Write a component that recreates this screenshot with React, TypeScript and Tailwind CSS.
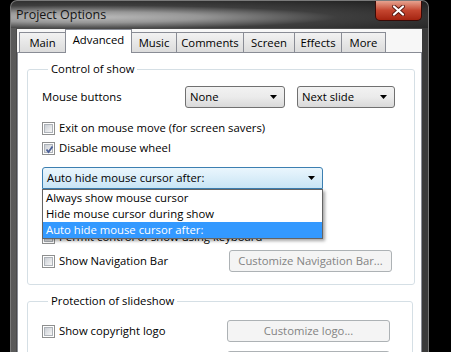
import React from "react";

const TABS = [
  { label: "Main", w: 47 },
  { label: "Advanced", w: 67, active: true },
  { label: "Music", w: 46 },
  { label: "Comments", w: 68 },
  { label: "Screen", w: 52 },
  { label: "Effects", w: 48 },
  { label: "More", w: 45 },
];

function Checkbox({ checked }: { checked?: boolean }) {
  return (
    <span className="relative w-[13px] h-[13px] border border-[#8e8f8f] bg-white p-[1px] flex shrink-0">
      <span className="flex-1 border border-[#aeb3b9] bg-gradient-to-br from-[#cbcfd5] to-[#f6f6f6]" />
      {checked && (
        <svg className="absolute left-[1px] top-[1px]" width="11" height="11" viewBox="0 0 11 11">
          <path d="M2.5 5.5 L4.5 8 L8.5 2.5" fill="none" stroke="#4a5f97" strokeWidth="1.8" />
        </svg>
      )}
    </span>
  );
}

function CheckRow({ label, checked }: { label: string; checked?: boolean }) {
  return (
    <div className="flex items-center gap-[4px] h-[20px]">
      <Checkbox checked={checked} />
      <span>{label}</span>
    </div>
  );
}

function Arrow() {
  return (
    <svg width="7" height="4" viewBox="0 0 7 4" className="shrink-0">
      <path d="M0 0 H7 L3.5 4 Z" fill="#000" />
    </svg>
  );
}

function Combo({ value, w }: { value: string; w: string }) {
  return (
    <div className={`${w} h-[22px] flex items-center justify-between pl-[4px] pr-[7px] border border-[#707070] rounded-[3px] bg-gradient-to-b from-[#f2f2f2] via-[#ebebeb] to-[#d9d9d9]`}>
      <span>{value}</span>
      <Arrow />
    </div>
  );
}

function DisabledButton({ label }: { label: string }) {
  return (
    <div className="mr-[3px] w-[163px] h-[22px] flex items-center justify-center border border-[#adb2b5] rounded-[3px] bg-[#f4f4f4] text-[#838383]">
      {label}
    </div>
  );
}

export default function App() {
  return (
    <div className="w-[451px] h-[352px] bg-black overflow-hidden font-['Open_Sans',sans-serif] text-[11.3px] leading-[16px] text-black">
      <div className="ml-[10px] w-[419px] h-[352px] flex flex-col overflow-hidden rounded-t-[7px] border-l border-r border-t border-[#7a7a7a] bg-gradient-to-r from-[#5a5a5a] via-[#333333] to-[#3a3a3a]">
        {/* Title bar */}
        <div className="shrink-0 h-[27px] flex justify-between rounded-t-[6px] bg-[radial-gradient(ellipse_at_18%_60%,#bcbcbc_0%,#969696_24%,#3e3e3e_52%,#1e1e1e_100%)]">
          <span className="pl-[5px] pt-[6px] text-[12.5px] text-[#141414]">Project Options</span>
          <div className="mr-[6px] w-[47px] h-[20px] flex items-center justify-center rounded-b-[5px] border border-t-0 border-[#3a0a06] bg-gradient-to-b from-[#e6a28f] via-[#c4452f] to-[#a5230f]">
            <svg width="13" height="11" viewBox="0 0 13 11">
              <path d="M2 1.5 L11 9.5 M11 1.5 L2 9.5" stroke="#5a1a12" strokeWidth="4" strokeLinecap="round" />
              <path d="M2 1.5 L11 9.5 M11 1.5 L2 9.5" stroke="#ffffff" strokeWidth="2.2" strokeLinecap="round" />
            </svg>
          </div>
        </div>

        {/* Client area */}
        <div className="ml-[5px] mr-[6px] flex-1 min-h-0 overflow-hidden bg-[#f0f0f0] border-l border-t border-[#4a4a4a] flex flex-col">
          {/* Tab strip */}
          <div className="shrink-0 flex items-end h-[23px] pl-[2px] bg-[#f7f7f7]">
            {TABS.map((t) =>
              t.active ? (
                <div
                  key={t.label}
                  style={{ width: t.w }}
                  className="relative z-10 -mb-[1px] h-[24px] flex justify-center pt-[2px] bg-white border border-b-0 border-[#898c95] -ml-[1px]"
                >
                  {t.label}
                </div>
              ) : (
                <div
                  key={t.label}
                  style={{ width: t.w }}
                  className="h-[20px] flex justify-center pt-[2px] border border-b-0 border-[#898c95] -ml-[1px] first:ml-0 bg-gradient-to-b from-[#f2f2f2] to-[#dcdcdc]"
                >
                  {t.label}
                </div>
              )
            )}
          </div>

          {/* Tab page */}
          <div className="shrink-0 bg-white border border-[#898c95] border-b-0 pl-[9px] pr-[8px]">
            <fieldset className="mt-[8px] border border-[#d5dfe5] rounded-[3px] pl-[14px] pr-[19px] pb-[12px]">
              <legend className="ml-[6px] px-[3px]">Control of show</legend>
              <div className="mt-[9px] flex items-center">
                <span className="w-[143px]">Mouse buttons</span>
                <div className="flex gap-[12px]">
                  <Combo value="None" w="w-[100px]" />
                  <Combo value="Next slide" w="w-[98px]" />
                </div>
              </div>
              <div className="mt-[10px]">
                <CheckRow label="Exit on mouse move (for screen savers)" />
                <CheckRow label="Disable mouse wheel" checked />
              </div>
              <div className="relative mt-[9px] w-[281px]">
                <div className="h-[22px] flex items-center justify-between pl-[4px] pr-[7px] border border-[#3c7fb1] rounded-t-[3px] bg-gradient-to-b from-[#eaf6fd] to-[#c9e5f5]">
                  <span>Auto hide mouse cursor after:</span>
                  <Arrow />
                </div>
                <div className="absolute z-20 left-0 top-[22px] w-[281px] bg-white border border-[#646464] shadow-[2px_2px_3px_rgba(0,0,0,0.35)]">
                  <div className="h-[16px] pl-[3px]">Always show mouse cursor</div>
                  <div className="h-[16px] pl-[3px]">Hide mouse cursor during show</div>
                  <div className="h-[16px] pl-[3px] bg-[#3399ff] text-white">Auto hide mouse cursor after:</div>
                </div>
              </div>
              <div className="mt-[38px]">
                <CheckRow label="Permit control of show using keyboard" />
              </div>
              <div className="mt-[3px] flex items-center justify-between">
                <CheckRow label="Show Navigation Bar" />
                <DisabledButton label="Customize Navigation Bar..." />
              </div>
            </fieldset>

            <fieldset className="mt-[8px] border border-[#d5dfe5] rounded-[3px] pl-[14px] pr-[19px] pb-[12px]">
              <legend className="ml-[6px] px-[3px]">Protection of slideshow</legend>
              <div className="mt-[11px] flex items-center justify-between">
                <CheckRow label="Show copyright logo" />
                <DisabledButton label="Customize logo..." />
              </div>
              <div className="mt-[9px] flex justify-end">
                <div className="mr-[3px] w-[163px] h-[22px] border border-[#adb2b5] rounded-[3px] bg-[#f4f4f4]" />
              </div>
            </fieldset>
          </div>
        </div>
      </div>
    </div>
  );
}
